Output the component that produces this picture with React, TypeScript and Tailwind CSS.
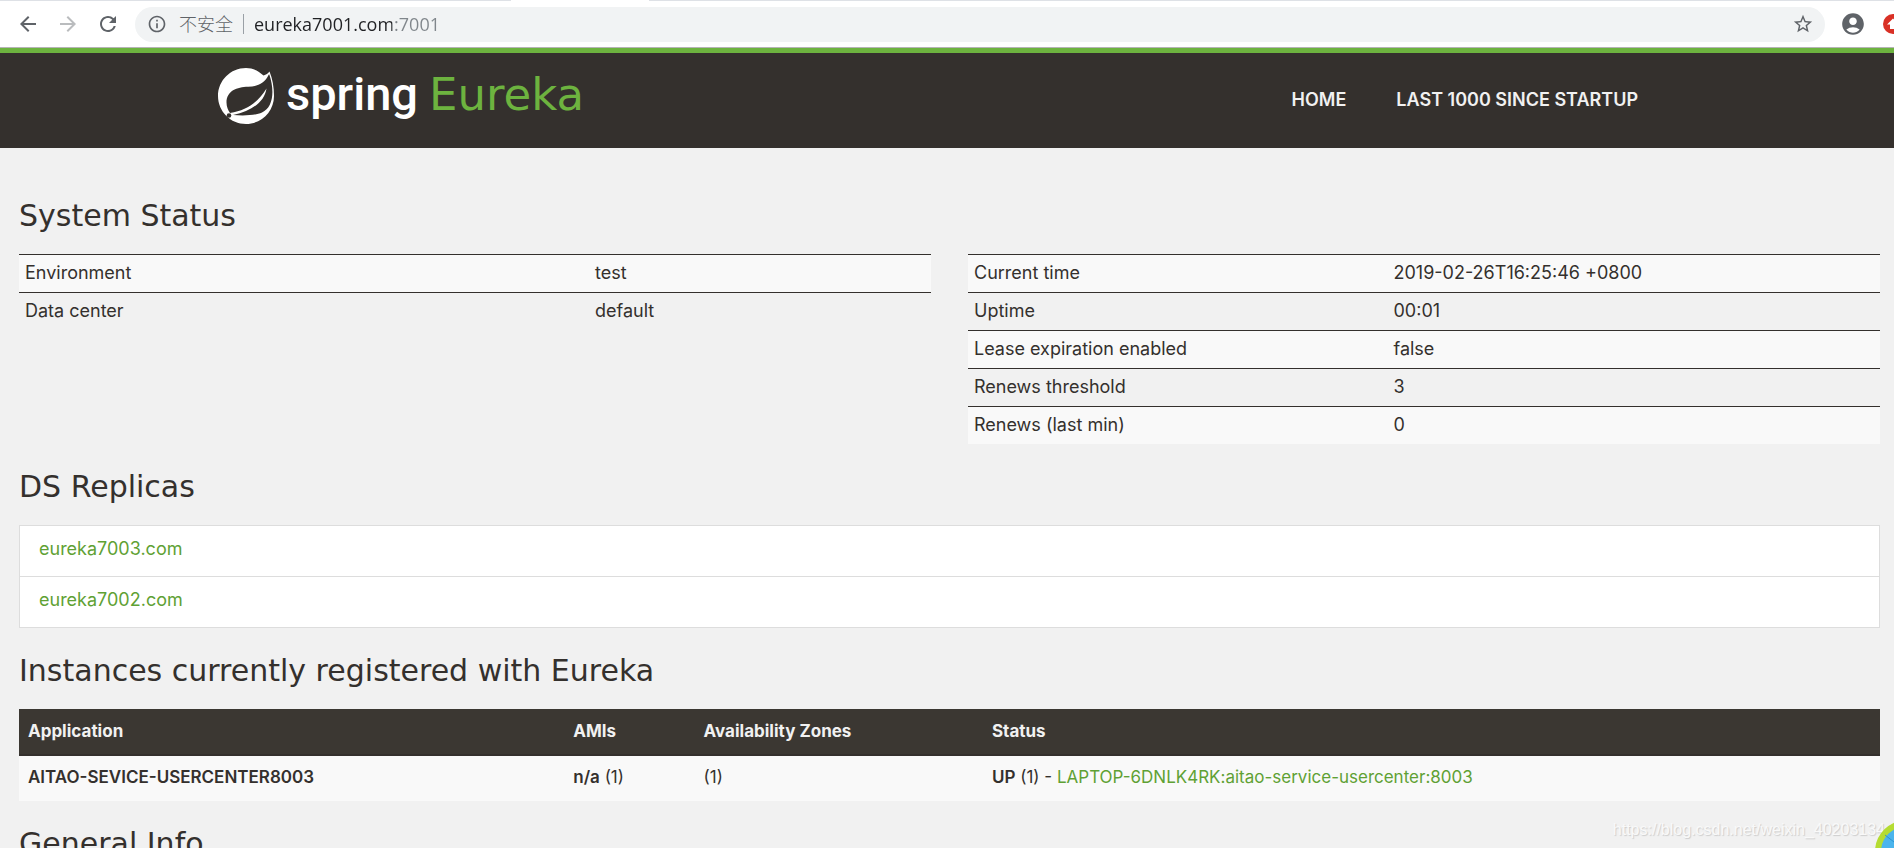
import { ReactNode } from "react";
import {
    MdAccountCircle,
    MdArrowBack,
    MdArrowForward,
    MdInfoOutline,
    MdRefresh,
    MdStarBorder,
} from "react-icons/md";

interface StatusRow {
    label: string,
    value: string,
}

interface StatusTableProps {
    name: string,
    rows: StatusRow[],
    labelWidth: string,
}

const environment: StatusRow[] = [
    { label: "Environment", value: "test" },
    { label: "Data center", value: "default" },
];

const runtime: StatusRow[] = [
    { label: "Current time", value: "2019-02-26T16:25:46 +0800" },
    { label: "Uptime", value: "00:01" },
    { label: "Lease expiration enabled", value: "false" },
    { label: "Renews threshold", value: "3" },
    { label: "Renews (last min)", value: "0" },
];

const replicas = ["eureka7003.com", "eureka7002.com"];

function BrowserBar() {
    return (
        <div className="border-b border-[#b6b4b6] bg-white">
            <div className="flex h-px">
                <div className="w-[27%] bg-[#dee1e6]" />
                <div className="w-[138px]" />
                <div className="flex-1 bg-[#dee1e6]" />
            </div>
            <div className="flex h-[46px] items-center overflow-hidden pl-2 text-[#5f6368]">
                <button aria-label="Back" className="flex w-10 shrink-0 justify-center">
                    <MdArrowBack size={24} />
                </button>
                <button aria-label="Forward" disabled className="flex w-10 shrink-0 justify-center text-[#babcbe]">
                    <MdArrowForward size={24} />
                </button>
                <button aria-label="Reload" className="flex w-10 shrink-0 justify-center">
                    <MdRefresh size={24} />
                </button>
                <div className="ml-[7px] flex h-[35px] flex-1 items-center rounded-full bg-[#f1f3f4] pl-3 pr-[11px]">
                    <MdInfoOutline size={20} className="shrink-0" />
                    <label htmlFor="address" className="ml-3 shrink-0 font-['Noto_Sans','Noto_Sans_CJK_SC',sans-serif] text-[18px] font-light leading-6">
                        不安全
                    </label>
                    <span className="ml-[10px] h-5 w-px shrink-0 bg-[#9aa0a6]" />
                    <input
                        id="address"
                        type="text"
                        defaultValue="eureka7001.com:7001"
                        className="ml-[10px] min-w-0 flex-1 bg-linear-to-r from-[#202124] from-[138px] to-[#80868b] to-[138px] bg-clip-text font-['Open_Sans',sans-serif] text-[18px] leading-6 text-transparent outline-none"
                    />
                    <button aria-label="Bookmark this page">
                        <MdStarBorder size={22} />
                    </button>
                </div>
                <button aria-label="Profile" className="flex w-14 shrink-0 justify-center">
                    <MdAccountCircle size={26} />
                </button>
                <button aria-label="Update available" className="ml-[2px] w-[11px] shrink-0">
                    <svg width="20" height="20" viewBox="0 0 20 20" className="max-w-none">
                        <circle cx="10" cy="10" r="10" fill="#d93025" />
                        <path d="M10 4.5 16 10.5h-3V15H7v-4.500H4z" fill="#fff" />
                    </svg>
                </button>
            </div>
        </div>
    )
}

function SpringLeaf() {
    return (
        <svg width="58" height="58" viewBox="0 0 58 58" aria-hidden="true">
            <path
                d="M46.500 8.500C41.500 3.600 35.500 1 29 1C13.500 1 1 13.500 1 29s12.500 28 28 28s28-12.500 28-28c0-9-1.400-17-4.500-24.500c-1.300 1.700-3.500 3.400-6 4z"
                fill="#fff"
            />
            <path
                d="M51.800 7.500C47.500 17 40 19.500 31 19.800C20 20 9.500 24 9.500 35.500c0 4 1.500 8 3.500 10.500c17-2.500 28-11 36.500-24.500c-2 13-14 22.500-33.500 26.500c10 .8 22 .6 29-2.500c11-5 13-21 7.300-38z"
                fill="#34302d"
            />
            <circle cx="12" cy="48.500" r="2.300" fill="#34302d" />
        </svg>
    )
}

function Header() {
    return (
        <header className="border-t-[5px] border-[#6db33f] bg-[#34302d]">
            <div className="mx-auto flex h-[95px] w-[1460px] max-w-full items-start justify-between pr-[14px]">
                <a href="#" aria-label="Spring Eureka" className="flex pt-[14px]">
                    <SpringLeaf />
                    <span className="ml-[11px] font-[Roboto,sans-serif] text-[47px] font-medium leading-[54px] text-white">spring</span>
                    <span className="ml-[11px] font-['DejaVu_Sans',sans-serif] text-[45px] leading-[56px] text-[#6db33f]">Eureka</span>
                </a>
                <nav className="flex pt-[35px] text-[18px] font-semibold leading-6 text-[#f1f1f1]">
                    <a href="#" className="px-[25px]">HOME</a>
                    <a href="#" className="px-[25px]">LAST 1000 SINCE STARTUP</a>
                </nav>
            </div>
        </header>
    )
}

function Title(props: { children: ReactNode }) {
    return (
        <h1 className="mt-[25px] mb-5 font-['DejaVu_Sans',sans-serif] text-[30px] leading-9">{props.children}</h1>
    )
}

function StatusTable(props: StatusTableProps) {
    return (
        <table aria-label={props.name} className="w-full table-fixed border-separate border-spacing-0 text-left">
            <tbody>
                {props.rows.map((row) => (
                    <tr key={row.label} className="h-[38px] odd:bg-[#f9f9f9]">
                        <th scope="row" className={`border-t border-[#34302d] px-[6px] pb-[2px] font-normal ${props.labelWidth}`}>{row.label}</th>
                        <td className="border-t border-[#34302d] px-[6px] pb-[2px]">{row.value}</td>
                    </tr>
                ))}
            </tbody>
        </table>
    )
}

function Instances() {
    return (
        <table aria-label="Instances" className="w-full table-fixed border-separate border-spacing-0 text-left text-[17px]">
            <thead>
                <tr className="h-[47px] bg-[#3b3732] text-[#f1f1f1]">
                    <th scope="col" className="w-[29.3%] border-b-2 border-[#34302d] px-[9px] pb-[2px]">Application</th>
                    <th scope="col" className="w-[7%] border-b-2 border-[#34302d] px-[9px] pb-[2px]">AMIs</th>
                    <th scope="col" className="w-[15.5%] border-b-2 border-[#34302d] px-[9px] pb-[2px]">Availability Zones</th>
                    <th scope="col" className="border-b-2 border-[#34302d] px-[9px] pb-[2px]">Status</th>
                </tr>
            </thead>
            <tbody>
                <tr className="h-[45px] bg-[#f9f9f9]">
                    <td className="px-[9px] pb-[3px] font-semibold">AITAO-SEVICE-USERCENTER8003</td>
                    <td className="px-[9px] pb-[3px]"><b className="font-semibold">n/a</b> (1)</td>
                    <td className="px-[9px] pb-[3px]">(1)</td>
                    <td className="px-[9px] pb-[3px]">
                        <b className="font-semibold">UP</b> (1) -{" "}
                        <a href="#" className="text-[#5fa134]">LAPTOP-6DNLK4RK:aitao-service-usercenter:8003</a>
                    </td>
                </tr>
            </tbody>
        </table>
    )
}

export default function App() {
    return (
        <div className="relative h-screen overflow-hidden bg-[#f1f1f1] font-[Inter,sans-serif] text-[18px] leading-6 text-[#34302d]">
            <BrowserBar />
            <Header />
            <main className="flex flex-col pt-[25px] pr-[14px] pl-[19px]">
                <Title>System Status</Title>
                <div className="grid grid-cols-2 items-start gap-[37px]">
                    <StatusTable name="Environment" rows={environment} labelWidth="w-[62.5%]" />
                    <StatusTable name="Runtime" rows={runtime} labelWidth="w-[46%]" />
                </div>
                <Title>DS Replicas</Title>
                <ul className="divide-y divide-[#ddd] border border-[#ddd] bg-white">
                    {replicas.map((host) => (
                        <li key={host} className="px-[19px] pt-[11px] pb-[15px]">
                            <a href="#" className="text-[#5fa134]">{host}</a>
                        </li>
                    ))}
                </ul>
                <Title>Instances currently registered with Eureka</Title>
                <Instances />
                <Title>General Info</Title>
            </main>
            <span className="absolute right-[9px] bottom-[6px] font-['Liberation_Sans',Arial,sans-serif] text-[16px] leading-6 text-[#f9f9f9] [text-shadow:1px_1px_1px_#ccc]">
                https://blog.csdn.net/weixin_40203134
            </span>
            <svg width="20" height="28" viewBox="0 0 20 28" className="absolute right-0 bottom-0" aria-hidden="true">
                <circle cx="33" cy="32" r="29" fill="#4bb4ec" stroke="#b5dc32" strokeWidth="6" />
                <path d="M11 15l9 7" stroke="#2b93d1" strokeWidth="1" />
            </svg>
        </div>
    )
}
